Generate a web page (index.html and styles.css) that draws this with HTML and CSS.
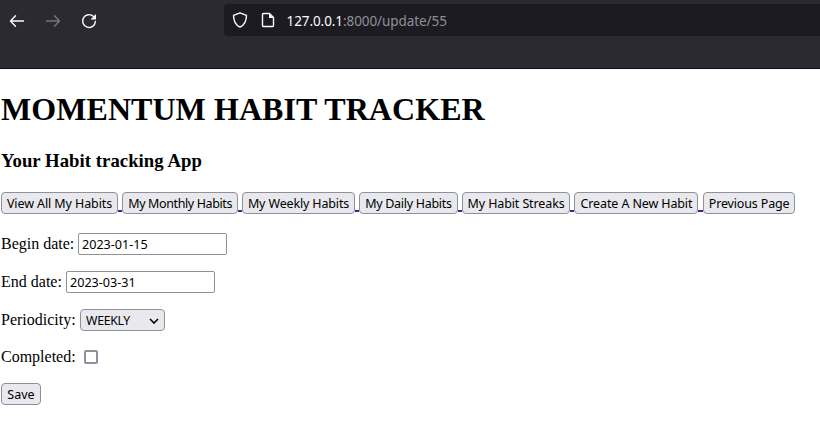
FILE: index.html
```html
<!DOCTYPE html>
<html lang="en">
<head>
<meta charset="utf-8">
<title>Momentum Habit Tracker</title>
<link rel="stylesheet" href="styles.css">
</head>
<body>
<header class="toolbar">
  <div class="nav">
    <svg width="16" height="16" viewBox="0 0 16 16" class="icon"><path d="M14.500 8H2M6.500 2.700L1.500 8l5 5.300"/></svg>
    <svg width="16" height="16" viewBox="0 0 16 16" class="icon dim"><path d="M1.500 8H14M9.500 2.700L14.500 8l-5 5.300"/></svg>
    <svg width="16" height="16" viewBox="0 0 16 16" class="icon"><path d="M12.600 3.600A6.400 6.400 0 1 0 14.400 8.400"/><path class="solid" d="M15 1v5.500H9.500z"/></svg>
  </div>
  <div class="address">
    <svg width="16" height="16" viewBox="0 0 16 16" class="icon"><path d="M8 .8l6.500 2.500c0 5.500-1.500 9.500-6.500 11.900C3 12.800 1.500 8.800 1.500 3.300z"/></svg>
    <svg width="16" height="16" viewBox="0 0 16 16" class="icon"><path d="M3.500 1.500h6l4 4v8a1 1 0 0 1-1 1h-9a1 1 0 0 1-1-1v-11a1 1 0 0 1 1-1z"/><path class="solid" d="M9 1.500v4.500h4.500z"/></svg>
    <span class="url"><b>127.0.0.1</b>:8000/update/55</span>
  </div>
</header>
<main>
  <h1>MOMENTUM HABIT TRACKER</h1>
  <h3>Your Habit tracking App</h3>
  <nav class="links">
    <button class="b-all">View All My Habits</button><i></i>
    <button class="b-month">My Monthly Habits</button><i></i>
    <button class="b-week">My Weekly Habits</button><i></i>
    <button class="b-day">My Daily Habits</button><i></i>
    <button class="b-streak">My Habit Streaks</button><i></i>
    <button class="b-new">Create A New Habit</button><i></i>
    <button class="b-prev">Previous Page</button>
  </nav>
  <form>
    <label class="row"><span class="l-begin">Begin date:</span><input type="text" value="2023-01-15"></label>
    <label class="row"><span class="l-end">End date:</span><input type="text" value="2023-03-31"></label>
    <label class="row"><span class="l-period">Periodicity:</span><span class="select">WEEKLY<svg width="10" height="6" viewBox="0 0 10 6"><path d="M1 1l4 4 4-4"/></svg></span></label>
    <label class="row short"><span class="l-done">Completed:</span><input type="checkbox"></label>
    <button class="b-save" type="button">Save</button>
  </form>
</main>
</body>
</html>
```
FILE: styles.css
```css
* { box-sizing: border-box; }
body { margin: 0; background: #fff; color: #000; font: 16px/18px "Liberation Serif", serif; }
.toolbar { height: 69px; background: #2b2a33; border-bottom: 1px solid #0c0c0d; display: flex; align-items: flex-start; padding-top: 4px; }
.nav { display: flex; gap: 20px; width: 224px; height: 32px; padding: 1px 0 0 9px; align-items: center; }
.icon { fill: none; stroke: #fbfbfe; stroke-width: 1.4; stroke-linecap: round; stroke-linejoin: round; flex: none; }
.icon .solid { fill: #fbfbfe; stroke: none; }
.dim { stroke: #77767e; }
.address { flex: 1; height: 32px; background: #1c1b22; border-radius: 4px 0 0 4px; display: flex; align-items: center; gap: 12px; padding-left: 8px; }
.url { font: 13.500px/20px "Noto Sans", sans-serif; color: #8f8f96; margin-left: -1.500px; padding-top: 2px; white-space: nowrap; letter-spacing: -.08px; }
.url b { font-weight: 400; color: #fbfbfe; }
main { padding-left: 1px; }
h1 { margin: 21px 0 0; font-size: 32px; line-height: 38px; white-space: nowrap; letter-spacing: .06px; }
h3 { margin: 22px 0 0; font-size: 18.72px; line-height: 22px; white-space: nowrap; letter-spacing: .05px; }
.links { display: flex; margin-top: 20px; height: 22px; }
.links i { width: 4.400px; height: 2px; margin-top: 18px; background: #551a8b; flex: none; }
button { height: 22px; padding: 1px 0 0; border: 1px solid #8f8f9d; border-radius: 4px; background: #e9e9ed; color: #000; font: 12.500px/19px "Noto Sans", sans-serif; white-space: nowrap; flex: none; text-align: center; }
.b-all { width: 117px; letter-spacing: -.1px; }
.b-month { width: 115.500px; letter-spacing: -.38px; }
.b-week { width: 112.500px; letter-spacing: -.15px; }
.b-day { width: 98.500px; letter-spacing: -.3px; }
.b-streak { width: 108px; letter-spacing: -.12px; }
.b-new { width: 124px; letter-spacing: -.12px; }
.b-prev { width: 92.500px; letter-spacing: -.15px; }
.b-save { width: 40px; display: block; margin-top: 16px; }
form { padding-top: 19px; }
.row { display: flex; align-items: center; height: 22px; margin-bottom: 16px; white-space: nowrap; }
.short { height: 20px; margin: 0; }
.l-begin { width: 77px; }
.l-end { width: 65px; }
.l-period { width: 79px; }
.l-done { width: 83px; }
input[type=text] { width: 149px; height: 22px; margin: 0; padding: 1px 3px 0; border: 1px solid #8f8f9d; border-radius: 2px; background: #fff; color: #000; font: 12.600px/19px "Noto Sans", sans-serif; }
.select { width: 85px; height: 22px; padding: 1px 5px 0; border: 1px solid #8f8f9d; border-radius: 4px; background: #e9e9ed; font: 12.300px/19px "Noto Sans", sans-serif; letter-spacing: -.3px; display: flex; align-items: center; justify-content: space-between; }
.select svg { fill: none; stroke: #000; stroke-width: 1.600; }
input[type=checkbox] { appearance: none; width: 14px; height: 14px; margin: 0; border: 2px solid #8f8f9d; border-radius: 2px; background: #fff; }
```
